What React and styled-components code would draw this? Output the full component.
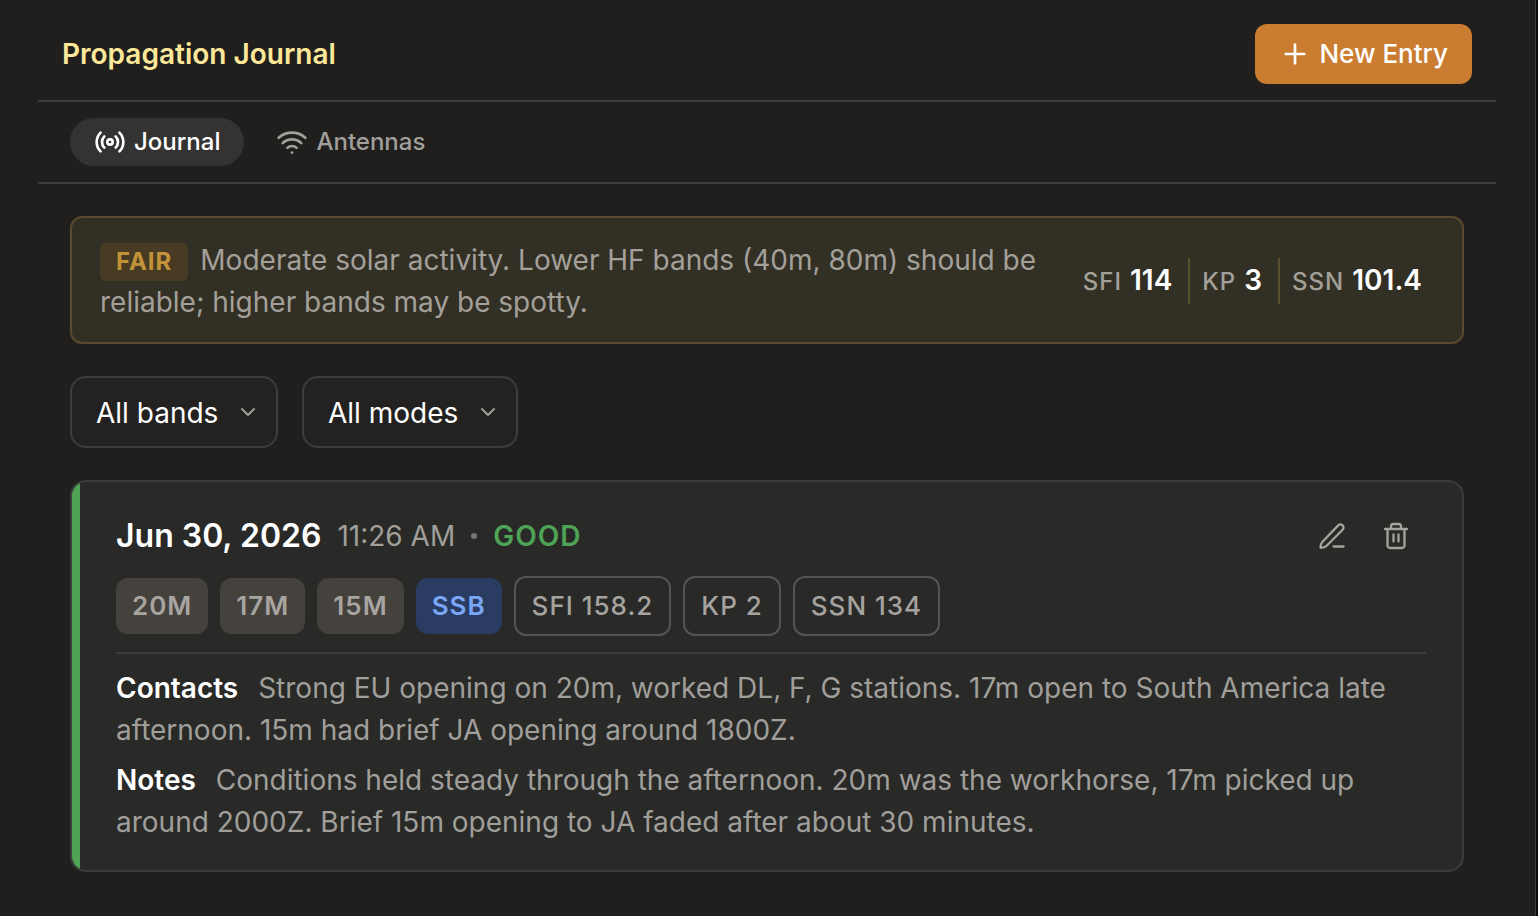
import React from 'react';
import styled, { createGlobalStyle, css } from 'styled-components';
import { Plus, Radio, Wifi, ChevronDown } from 'lucide-react';

const GlobalStyle = createGlobalStyle`
  *, *::before, *::after { box-sizing: border-box; }
  body {
    margin: 0;
    background: #0c0b0b;
    color: #ffffff;
    font-family: Inter, "Liberation Sans", sans-serif;
    font-size: 28px;
    line-height: 42px;
  }
  button, select { font: inherit; }
  h1, h2, p, dl, dd, ul { margin: 0; padding: 0; }
`;

const Page = styled.div`
  min-height: 100vh;
  margin-right: 2px;
  padding: 0 39px 44px 38px;
  border-right: 1px solid #3e3d3b;
  background: #201f1d;
`;

const Header = styled.header`
  display: flex;
  align-items: center;
  justify-content: space-between;
  padding: 24px 24px 16px;
  border-bottom: 2px solid #3e3d3b;
`;

const Title = styled.h1`
  font-size: 28px;
  font-weight: 600;
  color: #fde899;
`;

const PrimaryButton = styled.button`
  display: flex;
  align-items: center;
  gap: 8px;
  height: 60px;
  padding: 0 24px;
  border: 0;
  border-radius: 12px;
  background: #ca7d31;
  color: #ffffff;
  font-size: 26px;
  font-weight: 500;
  cursor: pointer;
`;

const Tabs = styled.nav`
  display: flex;
  gap: 8px;
  padding: 16px 32px;
  border-bottom: 2px solid #3e3d3b;
`;

const Tab = styled.button`
  display: flex;
  align-items: center;
  gap: 8px;
  height: 48px;
  padding: 0 24px;
  border: 0;
  border-radius: 24px;
  background: ${(p) => (p.$active ? '#343331' : 'transparent')};
  color: ${(p) => (p.$active ? '#ffffff' : '#a09f9b')};
  font-size: 24px;
  font-weight: 500;
  cursor: pointer;
`;

const Content = styled.main`
  display: flex;
  flex-direction: column;
  gap: 32px;
  padding: 32px;
`;

const Banner = styled.section`
  display: flex;
  align-items: center;
  justify-content: space-between;
  gap: 24px;
  padding: 21px 28px 19px;
  border: 2px solid #5a4a2e;
  border-radius: 12px;
  background: #322f25;
`;

const BannerText = styled.p`
  flex: 1;
  color: #a3a09a;
`;

const Rating = styled.span`
  display: inline-block;
  margin-right: 12px;
  padding: 0 16px;
  border-radius: 6px;
  background: #483b23;
  color: #c2923a;
  font-size: 24px;
  font-weight: 700;
  line-height: 38px;
  letter-spacing: 1px;
`;

const Stats = styled.dl`
  display: flex;
  align-items: center;
`;

const Stat = styled.div`
  display: flex;
  align-items: baseline;
  gap: 8px;
  padding: 0 16px 0 12px;
  line-height: 44px;

  & + & { border-left: 2px solid #58502f; }
  &:last-child { padding-right: 12px; }
`;

const StatName = styled.dt`
  color: #a3a09a;
  font-size: 24px;
  font-weight: 500;
  letter-spacing: 1px;
`;

const StatValue = styled.dd`
  font-weight: 600;
`;

const Filters = styled.div`
  display: flex;
  gap: 24px;
`;

const SelectWrap = styled.div`
  display: grid;
  align-items: center;

  & > * { grid-area: 1 / 1; }
  & > svg {
    justify-self: end;
    margin-right: 18px;
    color: #a09f9b;
    pointer-events: none;
  }
`;

const Select = styled.select`
  appearance: none;
  height: 72px;
  padding: 2px 57px 0 24px;
  border: 2px solid #3e3d3b;
  border-radius: 16px;
  background: #232220;
  color: #ffffff;
`;

const Card = styled.article`
  display: flex;
  overflow: hidden;
  border: 2px solid #3e3d3b;
  border-radius: 16px;
  background: #292927;

  &::before {
    content: "";
    flex: none;
    width: 8px;
    background: #4fa357;
  }
`;

const CardBody = styled.div`
  flex: 1;
  padding: 28px 36px 27px;
`;

const CardHeader = styled.header`
  display: flex;
  align-items: center;
  height: 52px;
`;

const EntryDate = styled.h2`
  margin-right: 16px;
  font-size: 32px;
  font-weight: 600;
`;

const EntryTime = styled.time`
  color: #a09f9b;
`;

const Dot = styled.span`
  width: 6px;
  height: 6px;
  margin: 0 16px;
  border-radius: 50%;
  background: #767573;
`;

const Condition = styled.span`
  color: #4fa357;
  font-weight: 600;
  letter-spacing: 1px;
`;

const Actions = styled.div`
  display: flex;
  gap: 4px;
  margin-left: auto;
`;

const IconButton = styled.button`
  display: grid;
  place-items: center;
  width: 60px;
  height: 52px;
  padding: 0;
  border: 0;
  background: none;
  color: #a5a3a0;
  cursor: pointer;
`;

const Chips = styled.ul`
  display: flex;
  align-items: center;
  gap: 12px;
  margin: 14px 0 16px;
  list-style: none;
`;

const chipKinds = {
  band: css`background: #45423e; color: #a8a4a0; font-weight: 600;`,
  mode: css`background: #2a3c62; color: #7aa7f5; font-weight: 600;`,
  index: css`border: 2px solid #555452; color: #a5a3a0; font-weight: 500;`,
};

const Chip = styled.li`
  box-sizing: content-box;
  padding: 0 16px;
  border-radius: 12px;
  font-size: 26px;
  line-height: 56px;
  letter-spacing: 1px;
  ${(p) => chipKinds[p.$kind]}
`;

const Details = styled.div`
  display: flex;
  flex-direction: column;
  gap: 8px;
  padding-top: 13px;
  border-top: 2px solid #3e3d3b;
`;

const Detail = styled.p`
  color: #a09f9b;

  strong {
    margin-right: 12px;
    color: #ffffff;
    font-weight: 600;
  }
`;

const stats = [['SFI', '114'], ['KP', '3'], ['SSN', '101.4']];

const chips = [
  ['band', '20M'], ['band', '17M'], ['band', '15M'], ['mode', 'SSB'],
  ['index', 'SFI 158.2'], ['index', 'KP 2'], ['index', 'SSN 134'],
];

const details = [
  ['Contacts', 'Strong EU opening on 20m, worked DL, F, G stations. 17m open to South America late afternoon. 15m had brief JA opening around 1800Z.'],
  ['Notes', 'Conditions held steady through the afternoon. 20m was the workhorse, 17m picked up around 2000Z. Brief 15m opening to JA faded after about 30 minutes.'],
];

const PencilIcon = () => (
  <svg width="28" height="28" viewBox="0 0 28 28" fill="none" stroke="currentColor" strokeWidth="2.300" strokeLinecap="round" strokeLinejoin="round" aria-hidden="true">
    <path d="M2.500 25.800c0-3 .5-4.600 2-6.100L20.200 3.400a3 3 0 0 1 4.400 4.400L8.700 23.800c-1.500 1.500-3.200 2-6.200 2z M15.500 24.500h10" />
  </svg>
);

const TrashIcon = () => (
  <svg width="28" height="28" viewBox="0 0 28 28" fill="none" stroke="currentColor" strokeWidth="2.300" strokeLinecap="round" strokeLinejoin="round" aria-hidden="true">
    <path d="M3 7h22 M5.500 7v16.500a2.500 2.500 0 0 0 2.500 2.500h12a2.500 2.500 0 0 0 2.500-2.500V7 M9 7V4.500A2.500 2.500 0 0 1 11.500 2h5A2.500 2.500 0 0 1 19 4.500V7 M11.500 12.500v7 M16.500 12.500v7" />
  </svg>
);

const FilterSelect = ({ label, option }) => (
  <SelectWrap>
    <Select aria-label={label}>
      <option>{option}</option>
    </Select>
    <ChevronDown size={24} strokeWidth={2} aria-hidden="true" />
  </SelectWrap>
);

export default function App() {
  return (
    <>
      <GlobalStyle />
      <Page>
        <Header>
          <Title>Propagation Journal</Title>
          <PrimaryButton type="button">
            <Plus size={32} strokeWidth={2} aria-hidden="true" />
            New Entry
          </PrimaryButton>
        </Header>
        <Tabs aria-label="Sections">
          <Tab type="button" $active aria-current="page">
            <Radio size={32} strokeWidth={2} aria-hidden="true" />
            Journal
          </Tab>
          <Tab type="button">
            <Wifi size={32} strokeWidth={2} aria-hidden="true" />
            Antennas
          </Tab>
        </Tabs>
        <Content>
          <Banner>
            <BannerText>
              <Rating>FAIR</Rating>
              Moderate solar activity. Lower HF bands (40m, 80m) should be reliable; higher bands may be spotty.
            </BannerText>
            <Stats>
              {stats.map(([name, value]) => (
                <Stat key={name}>
                  <StatName>{name}</StatName>
                  <StatValue>{value}</StatValue>
                </Stat>
              ))}
            </Stats>
          </Banner>
          <Filters>
            <FilterSelect label="Band" option="All bands" />
            <FilterSelect label="Mode" option="All modes" />
          </Filters>
          <Card>
            <CardBody>
              <CardHeader>
                <EntryDate>Jun 30, 2026</EntryDate>
                <EntryTime>11:26 AM</EntryTime>
                <Dot />
                <Condition>GOOD</Condition>
                <Actions>
                  <IconButton type="button" aria-label="Edit entry"><PencilIcon /></IconButton>
                  <IconButton type="button" aria-label="Delete entry"><TrashIcon /></IconButton>
                </Actions>
              </CardHeader>
              <Chips>
                {chips.map(([kind, text]) => (
                  <Chip key={text} $kind={kind}>{text}</Chip>
                ))}
              </Chips>
              <Details>
                {details.map(([label, text]) => (
                  <Detail key={label}><strong>{label}</strong> {text}</Detail>
                ))}
              </Details>
            </CardBody>
          </Card>
        </Content>
      </Page>
    </>
  );
}
